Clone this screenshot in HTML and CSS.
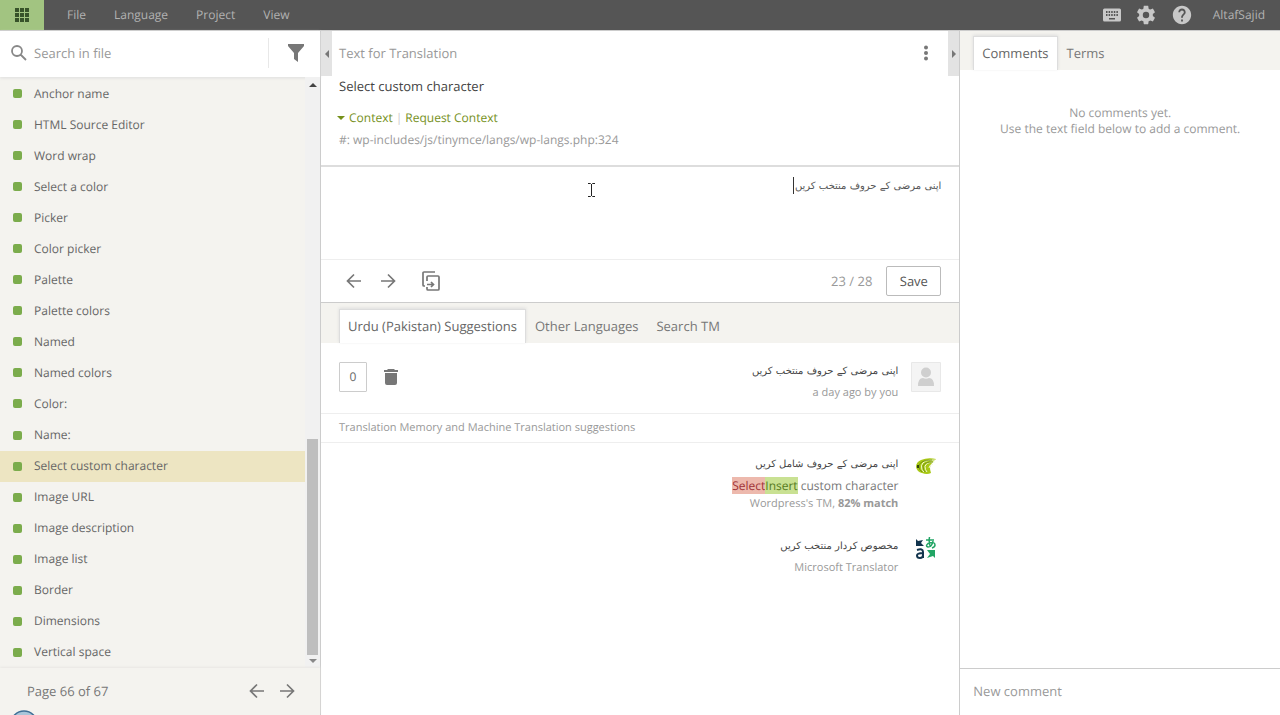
FILE: index.html
```html
<!DOCTYPE html>
<html lang="en">
<head>
<meta charset="utf-8">
<title>Translation editor</title>
<link rel="stylesheet" href="styles.css">
</head>
<body>
<svg class="defs" aria-hidden="true">
  <symbol id="arrow-left" viewBox="0 0 16 16"><path d="M15 8H2M8 1.500L1.500 8L8 14.500" fill="none" stroke="currentColor" stroke-width="1.700"/></symbol>
  <symbol id="arrow-right" viewBox="0 0 16 16"><path d="M1 8H14M8 1.500L14.500 8L8 14.500" fill="none" stroke="currentColor" stroke-width="1.700"/></symbol>
</svg>
<header class="topbar">
  <button class="apps" aria-label="Menu"><svg width="16" height="16" viewBox="0 0 16 16"><path fill="currentColor" d="M1 1h4v4H1zM6 1h4v4H6zM11 1h4v4h-4zM1 6h4v4H1zM6 6h4v4H6zM11 6h4v4h-4zM1 11h4v4H1zM6 11h4v4H6zM11 11h4v4h-4z"/></svg></button>
  <nav class="menu"><a href="#">File</a><a href="#">Language</a><a href="#">Project</a><a href="#">View</a></nav>
  <div class="tools">
    <button aria-label="Keyboard shortcuts"><svg width="18" height="14" viewBox="0 0 18 14"><path fill="currentColor" fill-rule="evenodd" d="M1.500.5h15q1.500 0 1.500 1.500v10q0 1.500-1.500 1.500h-15Q0 13.500 0 12V2Q0 .5 1.500.5zM3 3v2h1.500V3zM5.600 3v2h1.500V3zM8.200 3v2h1.500V3zM10.800 3v2h1.500V3zM13.400 3v2h1.500V3zM3 6v2h1.500V6zM5.600 6v2h1.500V6zM8.200 6v2h1.500V6zM10.800 6v2h1.500V6zM13.400 6v2h1.500V6zM6 10v1.500h6V10z"/></svg></button>
    <button aria-label="Settings"><svg width="22" height="22" viewBox="0 0 24 24"><path fill="currentColor" d="M19.430 12.980c.04-.32.070-.64.070-.98s-.03-.66-.07-.98l2.110-1.650c.19-.15.24-.42.12-.64l-2-3.460c-.12-.22-.39-.3-.61-.22l-2.490 1c-.52-.4-1.080-.73-1.690-.98l-.38-2.650C14.460 2.180 14.250 2 14 2h-4c-.25 0-.46.18-.49.42l-.38 2.650c-.61.25-1.170.59-1.690.98l-2.490-1c-.23-.09-.49 0-.61.22l-2 3.460c-.13.22-.07.49.12.64l2.110 1.650c-.04.32-.07.65-.07.98s.03.66.07.98l-2.110 1.650c-.19.15-.24.42-.12.64l2 3.460c.12.22.39.3.61.22l2.490-1c.52.4 1.080.73 1.690.98l.38 2.650c.03.24.24.42.49.42h4c.25 0 .46-.18.49-.42l.38-2.650c.61-.25 1.170-.59 1.690-.98l2.490 1c.23.09.49 0 .61-.22l2-3.460c.12-.22.070-.49-.12-.64zM12 15.500A3.500 3.500 0 1 1 12 8.500a3.500 3.500 0 0 1 0 7z"/></svg></button>
    <button aria-label="Help"><svg width="22" height="22" viewBox="0 0 24 24"><path fill="currentColor" d="M12 2C6.480 2 2 6.480 2 12s4.480 10 10 10 10-4.480 10-10S17.520 2 12 2zm1 17h-2v-2h2v2zm2.070-7.750l-.9.920C13.450 12.900 13 13.500 13 15h-2v-.5c0-1.100.45-2.100 1.170-2.830l1.240-1.260c.37-.36.59-.86.59-1.410 0-1.100-.9-2-2-2s-2 .9-2 2H8c0-2.210 1.790-4 4-4s4 1.790 4 4c0 .88-.36 1.680-.93 2.250z"/></svg></button>
    <a href="#" class="user">AltafSajid</a>
  </div>
</header>
<main class="workspace">
  <aside class="files">
    <div class="search">
      <svg width="16" height="16" viewBox="0 0 16 16"><path d="M10 10L15 15M11 6A5 5 0 1 1 1 6a5 5 0 0 1 10 0z" fill="none" stroke="#888" stroke-width="1.800"/></svg>
      <input type="text" placeholder="Search in file" aria-label="Search in file">
      <button class="filter" aria-label="Filter"><svg width="18" height="20" viewBox="0 0 18 20"><path fill="#777" d="M1 1h16v2l-6 7v9l-4-3v-6L1 3z"/></svg></button>
    </div>
    <div class="list-wrap">
      <ul class="strings">
        <li>Anchor name</li><li>HTML Source Editor</li><li>Word wrap</li><li>Select a color</li><li>Picker</li><li>Color picker</li><li>Palette</li><li>Palette colors</li><li>Named</li><li>Named colors</li><li>Color:</li><li>Name:</li><li class="current">Select custom character</li><li>Image URL</li><li>Image description</li><li>Image list</li><li>Border</li><li>Dimensions</li><li>Vertical space</li>
      </ul>
      <div class="scrollbar"><i class="up"></i><div class="track"><div class="thumb"></div></div><i class="down"></i></div>
    </div>
    <footer class="pager"><span>Page 66 of 67</span><button aria-label="Previous page"><svg width="16" height="16"><use href="#arrow-left"/></svg></button><button aria-label="Next page"><svg width="16" height="16"><use href="#arrow-right"/></svg></button>
      <svg class="orb" width="28" height="28" viewBox="0 0 28 28"><circle cx="14" cy="14" r="13" fill="#a9c6da" stroke="#3f6f96" stroke-width="1.500"/></svg>
    </footer>
  </aside>
  <section class="editor">
    <button class="handle left" aria-label="Collapse strings"><i></i></button>
    <button class="handle right" aria-label="Collapse comments"><i></i></button>
    <div class="source">
      <div class="source-head"><h2>Text for Translation</h2><button aria-label="More"><svg width="6" height="16" viewBox="0 0 6 16"><circle cx="3" cy="2.500" r="2"/><circle cx="3" cy="8" r="2"/><circle cx="3" cy="13.500" r="2"/></svg></button></div>
      <p class="phrase">Select custom character</p>
      <p class="context-links"><i></i><a href="#">Context</a><span>|</span><a href="#">Request Context</a></p>
      <p class="context">#: wp-includes/js/tinymce/langs/wp-langs.php:324</p>
    </div>
    <div class="target">
      <textarea dir="rtl" lang="ur" aria-label="Translation">اپنی مرضی کے حروف منتخب کریں</textarea>
      <i class="caret"></i>
      <svg class="pointer" width="9" height="16" viewBox="0 0 9 16"><path d="M1 1.500h2.500l1 1 1-1H8M4.500 2v12M1 14.500h2.500l1-1 1 1H8" fill="none" stroke="#222"/></svg>
    </div>
    <div class="actions">
      <button aria-label="Previous"><svg width="16" height="16"><use href="#arrow-left"/></svg></button>
      <button aria-label="Next"><svg width="16" height="16"><use href="#arrow-right"/></svg></button>
      <button class="copy" aria-label="Copy source"><svg width="18" height="20" viewBox="0 0 18 20"><path d="M13 1H2Q1 1 1 2v12q0 1 1 1h1M5 10V6q0-1 1-1h10q1 0 1 1v12q0 1-1 1H6q-1 0-1-1v-2M5 13.500h6M9 11l2.500 2.500L9 16" fill="none" stroke="currentColor" stroke-width="1.700"/></svg></button>
      <span class="count">23 / 28</span><button class="save">Save</button>
    </div>
    <nav class="tabs suggestions-tabs"><button class="active">Urdu (Pakistan) Suggestions</button><button>Other Languages</button><button>Search TM</button></nav>
    <article class="own">
      <button class="votes">0</button>
      <button class="trash" aria-label="Delete"><svg width="14" height="18" viewBox="0 0 14 18"><path fill="currentColor" d="M4 1h6l1 1h3v2H0V2h3zM1 5h12v10q0 2-2 2H3q-2 0-2-2z"/></svg></button>
      <div class="text"><p class="urdu" dir="rtl" lang="ur">اپنی مرضی کے حروف منتخب کریں</p><p class="meta">a day ago by you</p></div>
      <svg class="avatar" width="30" height="30" viewBox="0 0 30 30"><path fill="#f4f4f4" stroke="#e8e8e8" d="M.5.5h29v29H.5z"/><circle cx="15" cy="10.500" r="5" fill="#cfcfcf"/><path fill="#cfcfcf" d="M7 24q0-8 5-8q3 1.500 6 0q5 0 5 8z"/></svg>
    </article>
    <h3 class="divider">Translation Memory and Machine Translation suggestions</h3>
    <article class="match">
      <div class="text"><p class="urdu" dir="rtl" lang="ur">اپنی مرضی کے حروف شامل کریں</p><p class="diff"><del>Select</del><ins>Insert</ins> custom character</p><p class="meta">Wordpress's TM, <b>82% match</b></p></div>
      <svg class="brand" width="20" height="16" viewBox="0 0 20 16"><path fill="#a8c814" d="M20 1Q12-1 5 2Q0 4 0 9q1 5 6 6q5 2 9 0q-1-3-1-5q0-4 6-9z"/><path d="M19 2Q7 1.500 5.500 7.500Q5 12 8 14M18.500 4Q10 4 9 8.500Q9 12 11 14M17 6q-4 1-4 4" fill="none" stroke="#f4f8d8" stroke-width="1"/><path d="M16 2Q4 2 3 8Q3 12 6 14M17 4Q8 4 7 8Q7 12 9 14" fill="none" stroke="#6a8a0c" stroke-width=".8"/><path fill="#35450c" d="M1 7h2v3H1z"/></svg>
    </article>
    <article class="match">
      <div class="text"><p class="urdu" dir="rtl" lang="ur">مخصوص کردار منتخب کریں</p><p class="meta">Microsoft Translator</p></div>
      <svg class="brand" width="20" height="22" viewBox="0 0 20 22"><path fill="#12344d" d="M0 2l2 2 5-1-2 3 3 3H0z"/><path d="M1 13q6-2 6 2v6M7 16Q1 16 1 18.500T4 21Q7 21 7 18" fill="none" stroke="#12344d" stroke-width="2"/><path d="M10 3h8M13.500 0q-1 6 1 10M17 4q-1 6-5 6q-3-1 0-3.500Q19 4 19 8q0 2-3 3" fill="none" stroke="#22a565" stroke-width="1.500"/><path fill="#22a565" d="M11 13h8v8l-2-2-6 2 3-4z"/></svg>
    </article>
  </section>
  <aside class="comments">
    <nav class="tabs"><button class="active">Comments</button><button>Terms</button></nav>
    <p class="empty">No comments yet.<br>Use the text field below to add a comment.</p>
    <input class="new-comment" type="text" placeholder="New comment" aria-label="New comment">
  </aside>
</main>
</body>
</html>
```
FILE: styles.css
```css
* { box-sizing: border-box; }
body { margin: 0; height: 100vh; display: flex; flex-direction: column; overflow: hidden; background: #fff; color: #666; font: 13px/18px "Open Sans", sans-serif; text-rendering: geometricPrecision; }
p, h2, h3, ul { margin: 0; padding: 0; font: inherit; }
a { color: inherit; text-decoration: none; }
button, input, textarea { font: inherit; color: inherit; background: none; border: 0; padding: 0; margin: 0; outline: 0; text-rendering: inherit; }
button { display: flex; align-items: center; justify-content: center; }
svg { display: block; flex: none; }
.defs { position: absolute; width: 0; height: 0; }
input::placeholder { color: #999; opacity: 1; }

.topbar { display: flex; align-items: center; height: 30px; flex: none; background: #555; color: #b2b2b2; font-size: 12px; }
.apps { width: 44px; height: 30px; background: #a2c481; color: #38532a; }
.menu { display: flex; gap: 28px; padding-left: 23px; flex: 1; }
.tools { display: flex; align-items: center; gap: 14px; padding-right: 13px; }
.tools button { color: #c8c8c8; }
.user { padding: 0 2px 0 6px; }

.workspace { flex: 1; min-height: 0; display: grid; grid-template-columns: 321px minmax(0, 2fr) minmax(0, 1fr); border-top: 1px solid #ccc; }
.files { display: flex; flex-direction: column; min-height: 0; background: #f4f3ef; border-right: 1px solid #ccc; }
.search { height: 46px; flex: none; display: flex; align-items: center; padding: 0 0 2px 11px; background: #fff; box-shadow: 0 1px 3px #ddd; }
.search input { flex: 1; min-width: 0; margin-left: 7px; }
.filter { width: 52px; height: 30px; border-left: 1px solid #e8e8e8; padding-left: 3px; }
.list-wrap { flex: 1; min-height: 0; display: flex; }
.strings { flex: 1; display: flex; flex-direction: column; list-style: none; font-size: 12px; padding-top: 1px; }
.strings li { flex: 1; display: flex; align-items: center; gap: 12px; padding-left: 13px; }
.strings li::before { content: ""; width: 9px; height: 9px; border-radius: 2px; background: #7bac4c; }
.strings .current { background: #ede5c2; }
.scrollbar { width: 15px; display: flex; flex-direction: column; align-items: center; padding: 6px 0 5px; background: #f1f1f1; }
.scrollbar i { border: 4px solid transparent; border-top: 0; border-bottom: 4px solid #444; }
.scrollbar .down { border-bottom: 0; border-top: 4px solid #888; }
.track { flex: 1; width: 11px; display: flex; align-items: flex-end; padding-bottom: 4px; }
.thumb { width: 100%; height: 38%; background: #bebebe; }
.pager { position: relative; height: 47px; flex: none; display: flex; align-items: center; gap: 14px; padding: 0 25px 2px 27px; box-shadow: 0 -1px 2px #e8e7e3; color: #777; }
.pager span { flex: 1; }
.orb { position: absolute; left: 10px; top: 42px; }

.editor { position: relative; min-width: 0; display: flex; flex-direction: column; border-right: 1px solid #ccc; }
.handle { position: absolute; top: 0; width: 11px; height: 45px; background: #e3e3e3; }
.handle i { border: 4px solid transparent; }
.left { left: 0; }
.right { right: 0; }
.left i { border-left: 0; border-right-color: #777; }
.right i { border-right: 0; border-left-color: #777; }
.source { padding: 13px 18px 16px; border-bottom: 2px solid #ddd; }
.source-head { display: flex; justify-content: space-between; align-items: center; padding-right: 12px; color: #999; }
.source-head svg { fill: #777; }
.phrase { margin-top: 15px; color: #444; }
.context-links { display: flex; align-items: center; margin-top: 14px; color: #75901a; font-size: 12px; }
.context-links i { border: 4px solid transparent; border-top: 4px solid; border-bottom: 0; margin: 0 4px 0 -2px; }
.context-links span { color: #ccc; margin: 0 3px; }
.context { margin-top: 4px; color: #999; font-size: 12px; }
.target { position: relative; height: 93px; flex: none; display: flex; border-bottom: 1px solid #eee; }
.target textarea { flex: 1; resize: none; padding: 11px 18px; overflow: hidden; color: #555; }
.target textarea, .urdu { font-family: "DejaVu Sans", sans-serif; font-size: 10px; }
.caret { position: absolute; right: 165px; top: 10px; width: 1px; height: 17px; background: #333; }
.pointer { position: absolute; left: 266px; top: 15px; }
.actions { height: 43px; flex: none; display: flex; align-items: center; gap: 18px; padding: 0 18px 0 25px; border-bottom: 1px solid #ccc; color: #777; }
.copy { margin-left: 8px; }
.count { margin-left: auto; color: #999; }
.save { width: 55px; height: 30px; border: 1px solid #bbb; border-radius: 2px; color: #555; margin-left: -4px; }
.tabs { display: flex; align-items: flex-end; height: 40px; flex: none; padding: 6px 18px 0; background: #f4f3ef; color: #777; }
.tabs button { height: 34px; padding: 0 9px 1px; }
.tabs .active { background: #fff; border: 1px solid #ddd; border-bottom: 0; box-shadow: 0 -1px 3px #ddd; padding: 0 8px 2px; color: #666; }
.own { display: flex; height: 71px; flex: none; align-items: center; padding: 0 18px 2px; border-bottom: 1px solid #eee; }
.votes { width: 28px; height: 30px; border: 1px solid #ccc; border-radius: 1px; font-size: 12px; }
.trash { margin-left: 17px; color: #777; }
.text { flex: 1; text-align: right; color: #777; }
.own .text { padding-top: 10px; }
.urdu { color: #444; line-height: 20px; }
.urdu + p { margin-top: 2px; }
.meta { color: #999; font-size: 11px; }
.avatar { margin-left: 13px; }
.divider { padding: 5px 18px; border-bottom: 1px solid #eee; color: #999; font-size: 11px; }
.match { display: flex; padding: 12px 18px 20px; }
.diff { font-size: 12px; }
.match + .match { padding-top: 4px; }
.brand { margin: 3px 5px 0 18px; }
.match + .match .brand { margin-top: 0; }
del, ins { text-decoration: none; }
del { background: #edb9ad; color: #a03238; }
ins { background: #c9e193; color: #567b1d; }

.comments { display: flex; flex-direction: column; min-width: 0; }
.comments .tabs { padding: 6px 13px 0; height: 39px; }
.empty { flex: 1; padding: 35px 16px; text-align: center; color: #999; font-size: 12px; line-height: 16px; }
.new-comment { height: 47px; padding: 0 13px 2px; border-top: 1px solid #ccc; }
```
